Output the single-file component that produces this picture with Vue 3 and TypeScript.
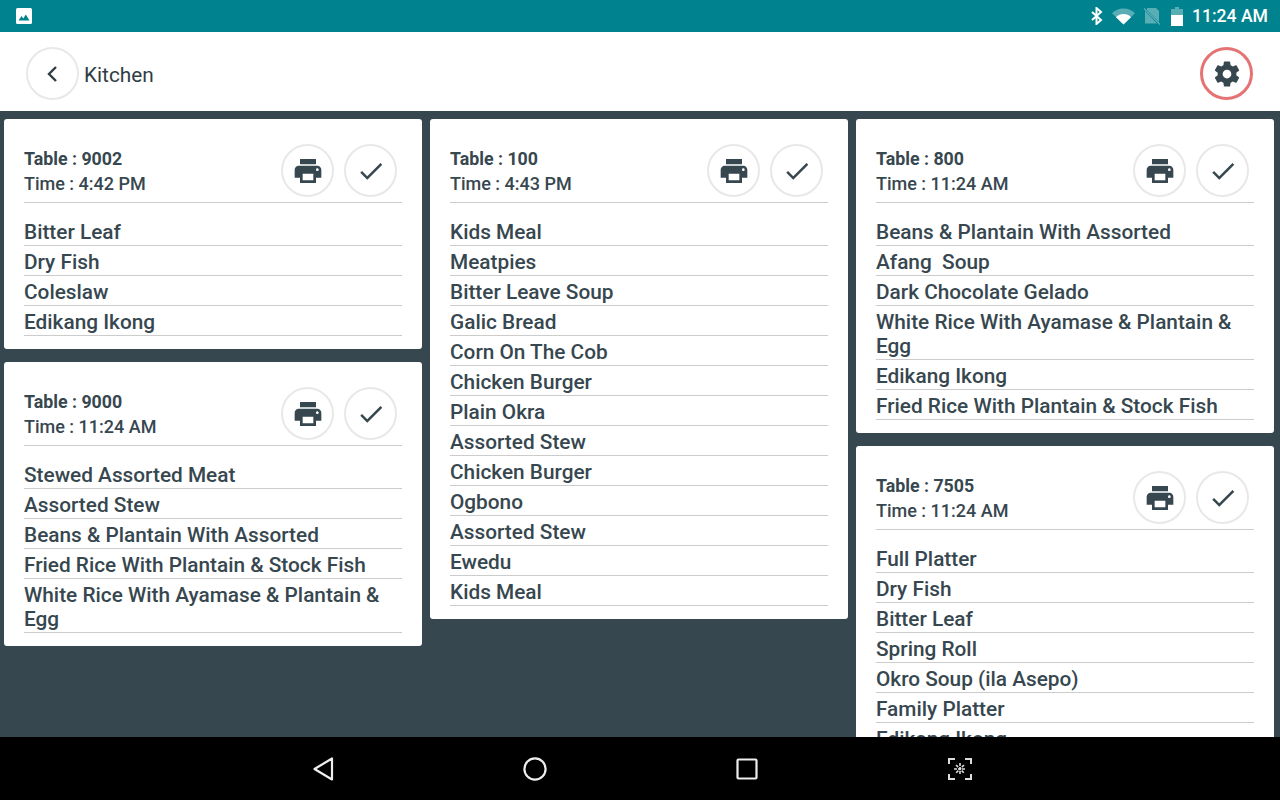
<script setup lang="ts">
interface Ticket {
  table: string
  time: string
  items: string[]
}

const columns: Ticket[][] = [
  [
    { table: '9002', time: '4:42 PM', items: ['Bitter Leaf', 'Dry Fish', 'Coleslaw', 'Edikang Ikong'] },
    {
      table: '9000',
      time: '11:24 AM',
      items: [
        'Stewed Assorted Meat',
        'Assorted Stew',
        'Beans & Plantain With Assorted',
        'Fried Rice With Plantain & Stock Fish',
        'White Rice With Ayamase & Plantain & Egg',
      ],
    },
  ],
  [
    {
      table: '100',
      time: '4:43 PM',
      items: [
        'Kids Meal',
        'Meatpies',
        'Bitter Leave Soup',
        'Galic Bread',
        'Corn On The Cob',
        'Chicken Burger',
        'Plain Okra',
        'Assorted Stew',
        'Chicken Burger',
        'Ogbono',
        'Assorted Stew',
        'Ewedu',
        'Kids Meal',
      ],
    },
  ],
  [
    {
      table: '800',
      time: '11:24 AM',
      items: [
        'Beans & Plantain With Assorted',
        'Afang\u00a0 Soup',
        'Dark Chocolate Gelado',
        'White Rice With Ayamase & Plantain & Egg',
        'Edikang Ikong',
        'Fried Rice With Plantain & Stock Fish',
      ],
    },
    {
      table: '7505',
      time: '11:24 AM',
      items: [
        'Full Platter',
        'Dry Fish',
        'Bitter Leaf',
        'Spring Roll',
        'Okro Soup (ila Asepo)',
        'Family Platter',
        'Edikang Ikong',
      ],
    },
  ],
]
</script>

<template>
  <div class="screen">
    <div class="status-bar">
      <svg class="notif" width="16" height="16" viewBox="0 0 16 16">
        <rect width="16" height="16" rx="1.5" fill="#fff" />
        <path d="M2.500 12.500 5.500 8l1.800 2.400L9.800 6.500l3.700 6z" fill="#00838f" />
      </svg>
      <div class="status-right">
        <svg width="14" height="18" viewBox="0 0 14 18">
          <path d="M2 5l9 8-4.500 4V1L11 5 2 13" fill="none" stroke="#fff" stroke-width="2" />
        </svg>
        <svg class="wifi" width="23" height="17" viewBox="0 0 23 17">
          <path d="M0 5.200C3 2.200 7 .4 11.500.4S20 2.200 23 5.200L11.500 16.600z" fill="#fff" fill-opacity=".35" />
          <path d="M4 9.200C6 7.200 8.600 6 11.500 6s5.500 1.200 7.500 3.200L11.500 16.600z" fill="#fff" />
        </svg>
        <svg class="sim" width="18" height="18" viewBox="0 0 18 18">
          <path d="M4 1h9l3 3v11L4 3zM2 4l12 12.500H2z" fill="#fff" fill-opacity=".35" />
          <path d="M1 1.500 17 17.500" stroke="#fff" stroke-opacity=".35" stroke-width="1.200" />
        </svg>
        <svg class="battery" width="12" height="19" viewBox="0 0 12 19">
          <path d="M4 0h4v2h4v6H0V2h4z" fill="#fff" fill-opacity=".35" />
          <rect y="8" width="12" height="11" fill="#fff" />
        </svg>
        <span class="clock">11:24 AM</span>
      </div>
    </div>

    <header class="top-bar">
      <div class="top-left">
        <button class="round">
          <svg width="14" height="20" viewBox="0 0 14 20">
            <path d="M10 3 3 10l7 7" fill="none" stroke="#2f3d45" stroke-width="2.400" />
          </svg>
        </button>
        <span class="page-title">Kitchen</span>
      </div>
      <button class="round gear-btn">
        <svg width="30" height="30" viewBox="0 0 24 24">
          <path
            fill="#37474f"
            d="M19.430 12.980c.04-.32.07-.64.07-.98s-.03-.66-.07-.98l2.110-1.650c.19-.15.24-.42.120-.64l-2-3.460c-.12-.22-.39-.3-.61-.22l-2.490 1c-.52-.4-1.080-.73-1.690-.98l-.38-2.650C14.460 2.180 14.250 2 14 2h-4c-.25 0-.46.18-.49.42l-.38 2.650c-.61.25-1.170.59-1.690.98l-2.490-1c-.23-.09-.49 0-.61.22l-2 3.460c-.13.22-.07.49.120.64l2.110 1.650c-.04.32-.07.65-.07.98s.03.66.07.98l-2.110 1.650c-.19.15-.24.42-.12.64l2 3.460c.12.22.39.3.61.22l2.490-1c.52.4 1.080.73 1.690.98l.38 2.650c.03.24.24.42.49.42h4c.25 0 .46-.18.49-.42l.38-2.650c.61-.25 1.170-.59 1.690-.98l2.490 1c.23.09.49 0 .61-.22l2-3.460c.12-.22.07-.49-.12-.64l-2.110-1.650zM12 15.500c-1.930 0-3.500-1.570-3.500-3.500s1.570-3.500 3.500-3.500 3.500 1.570 3.500 3.500-1.570 3.500-3.500 3.500z"
          />
        </svg>
      </button>
    </header>

    <main class="board">
      <div v-for="(column, c) in columns" :key="c" class="column">
        <section v-for="ticket in column" :key="ticket.table" class="card">
          <div class="card-head">
            <div class="card-info">
              <div class="card-table">Table : {{ ticket.table }}</div>
              <div class="card-time">Time : {{ ticket.time }}</div>
            </div>
            <div class="card-actions">
              <button class="round">
                <svg width="32" height="32" viewBox="0 0 24 24">
                  <path
                    fill="#37474f"
                    d="M19 8H5c-1.660 0-3 1.340-3 3v6h4v4h12v-4h4v-6c0-1.660-1.340-3-3-3zm-3 11H8v-5h8v5zm3-7c-.55 0-1-.45-1-1s.45-1 1-1 1 .45 1 1-.45 1-1 1zm-1-9H6v4h12V3z"
                  />
                </svg>
              </button>
              <button class="round">
                <svg width="30" height="30" viewBox="0 0 24 24">
                  <path d="M9 16.170 4.830 12l-1.420 1.410L9 19 21 7l-1.410-1.410z" fill="#37474f" />
                </svg>
              </button>
            </div>
          </div>
          <ul class="items">
            <li v-for="(item, i) in ticket.items" :key="i">{{ item }}</li>
          </ul>
        </section>
      </div>
    </main>

    <nav class="nav-bar">
      <svg class="nav-back" width="22" height="26" viewBox="0 0 22 26">
        <path d="M20 2.500v21L2.500 13z" fill="none" stroke="#eee" stroke-width="2.200" stroke-linejoin="round" />
      </svg>
      <svg class="nav-home" width="24" height="24" viewBox="0 0 24 24">
        <circle cx="12" cy="12" r="10.600" fill="none" stroke="#eee" stroke-width="2.200" />
      </svg>
      <svg class="nav-recent" width="22" height="22" viewBox="0 0 22 22">
        <rect x="1.500" y="1.500" width="19" height="19" rx="1" fill="none" stroke="#eee" stroke-width="2.200" />
      </svg>
      <svg class="nav-shot" width="26" height="26" viewBox="0 0 26 26">
        <path d="M2 8V3h6M18 3h6v5M24 18v5h-6M8 23H2v-5" fill="none" stroke="#ddd" stroke-width="2" />
        <path
          d="M13 7v12M7 13h12M9 9l8 8M17 9l-8 8"
          stroke="#ddd"
          stroke-width="1.600"
          stroke-dasharray="3 1"
        />
      </svg>
    </nav>
  </div>
</template>

<style>
html,
body {
  margin: 0;
  background: #37474f;
}
</style>

<style scoped>
.screen {
  width: 1280px;
  height: 800px;
  display: flex;
  flex-direction: column;
  overflow: hidden;
  font-family: Roboto, "Liberation Sans", sans-serif;
  color: #37474f;
}

.status-bar {
  height: 32px;
  flex: none;
  display: flex;
  align-items: center;
  justify-content: space-between;
  padding: 0 12px 0 16px;
  background: #00838f;
}

.notif {
  display: block;
}

.status-right {
  display: flex;
  align-items: center;
  color: #fff;
}

.wifi {
  margin-left: 8px;
}

.sim {
  margin-left: 8px;
}

.battery {
  margin-left: 10px;
}

.clock {
  margin-left: 9px;
  font-size: 17.6px;
  font-weight: 500;
}

.top-bar {
  height: 79px;
  flex: none;
  box-sizing: border-box;
  display: flex;
  align-items: center;
  justify-content: space-between;
  padding: 4px 27px 0 26px;
  background: #fff;
}

.top-left {
  display: flex;
  align-items: center;
  gap: 5px;
}

.page-title {
  font-size: 20.8px;
  line-height: 26px;
  padding-top: 2px;
  color: #2f3d45;
}

.round {
  width: 53px;
  height: 53px;
  flex: none;
  box-sizing: border-box;
  padding: 0;
  display: flex;
  align-items: center;
  justify-content: center;
  background: #fff;
  border: 2px solid #e8e8e8;
  border-radius: 50%;
}

.gear-btn {
  border: 3px solid #e57373;
}

.board {
  flex: 1;
  min-height: 0;
  display: flex;
  gap: 8px;
  padding: 8px 6px 0 4px;
  overflow: hidden;
  background: #37474f;
}

.column {
  flex: 1;
  min-width: 0;
  display: flex;
  flex-direction: column;
  gap: 13px;
}

.card {
  flex: none;
  padding: 0 20px 13px;
  background: #fff;
  border-radius: 3px;
}

.card-head {
  height: 84px;
  box-sizing: border-box;
  display: flex;
  justify-content: space-between;
  padding: 25px 5px 0 0;
  border-bottom: 1px solid #ccc;
}

.card-info {
  padding-top: 1px;
}

.card-table {
  font-size: 17.8px;
  font-weight: 700;
  line-height: 28px;
}

.card-time {
  font-size: 18px;
  font-weight: 500;
  line-height: 22px;
}

.card-actions {
  display: flex;
  gap: 10px;
}

.items {
  list-style: none;
  margin: 13px 0 0;
  padding: 0;
}

.items li {
  padding: 4px 0 1px;
  font-size: 20.8px;
  font-weight: 500;
  line-height: 24px;
  border-bottom: 1px solid #ccc;
}

.nav-bar {
  height: 63px;
  flex: none;
  display: flex;
  align-items: center;
  padding-left: 312px;
  background: #000;
}

.nav-home {
  margin-left: 189px;
}

.nav-recent {
  margin-left: 189px;
}

.nav-shot {
  margin-left: 189px;
}
</style>
